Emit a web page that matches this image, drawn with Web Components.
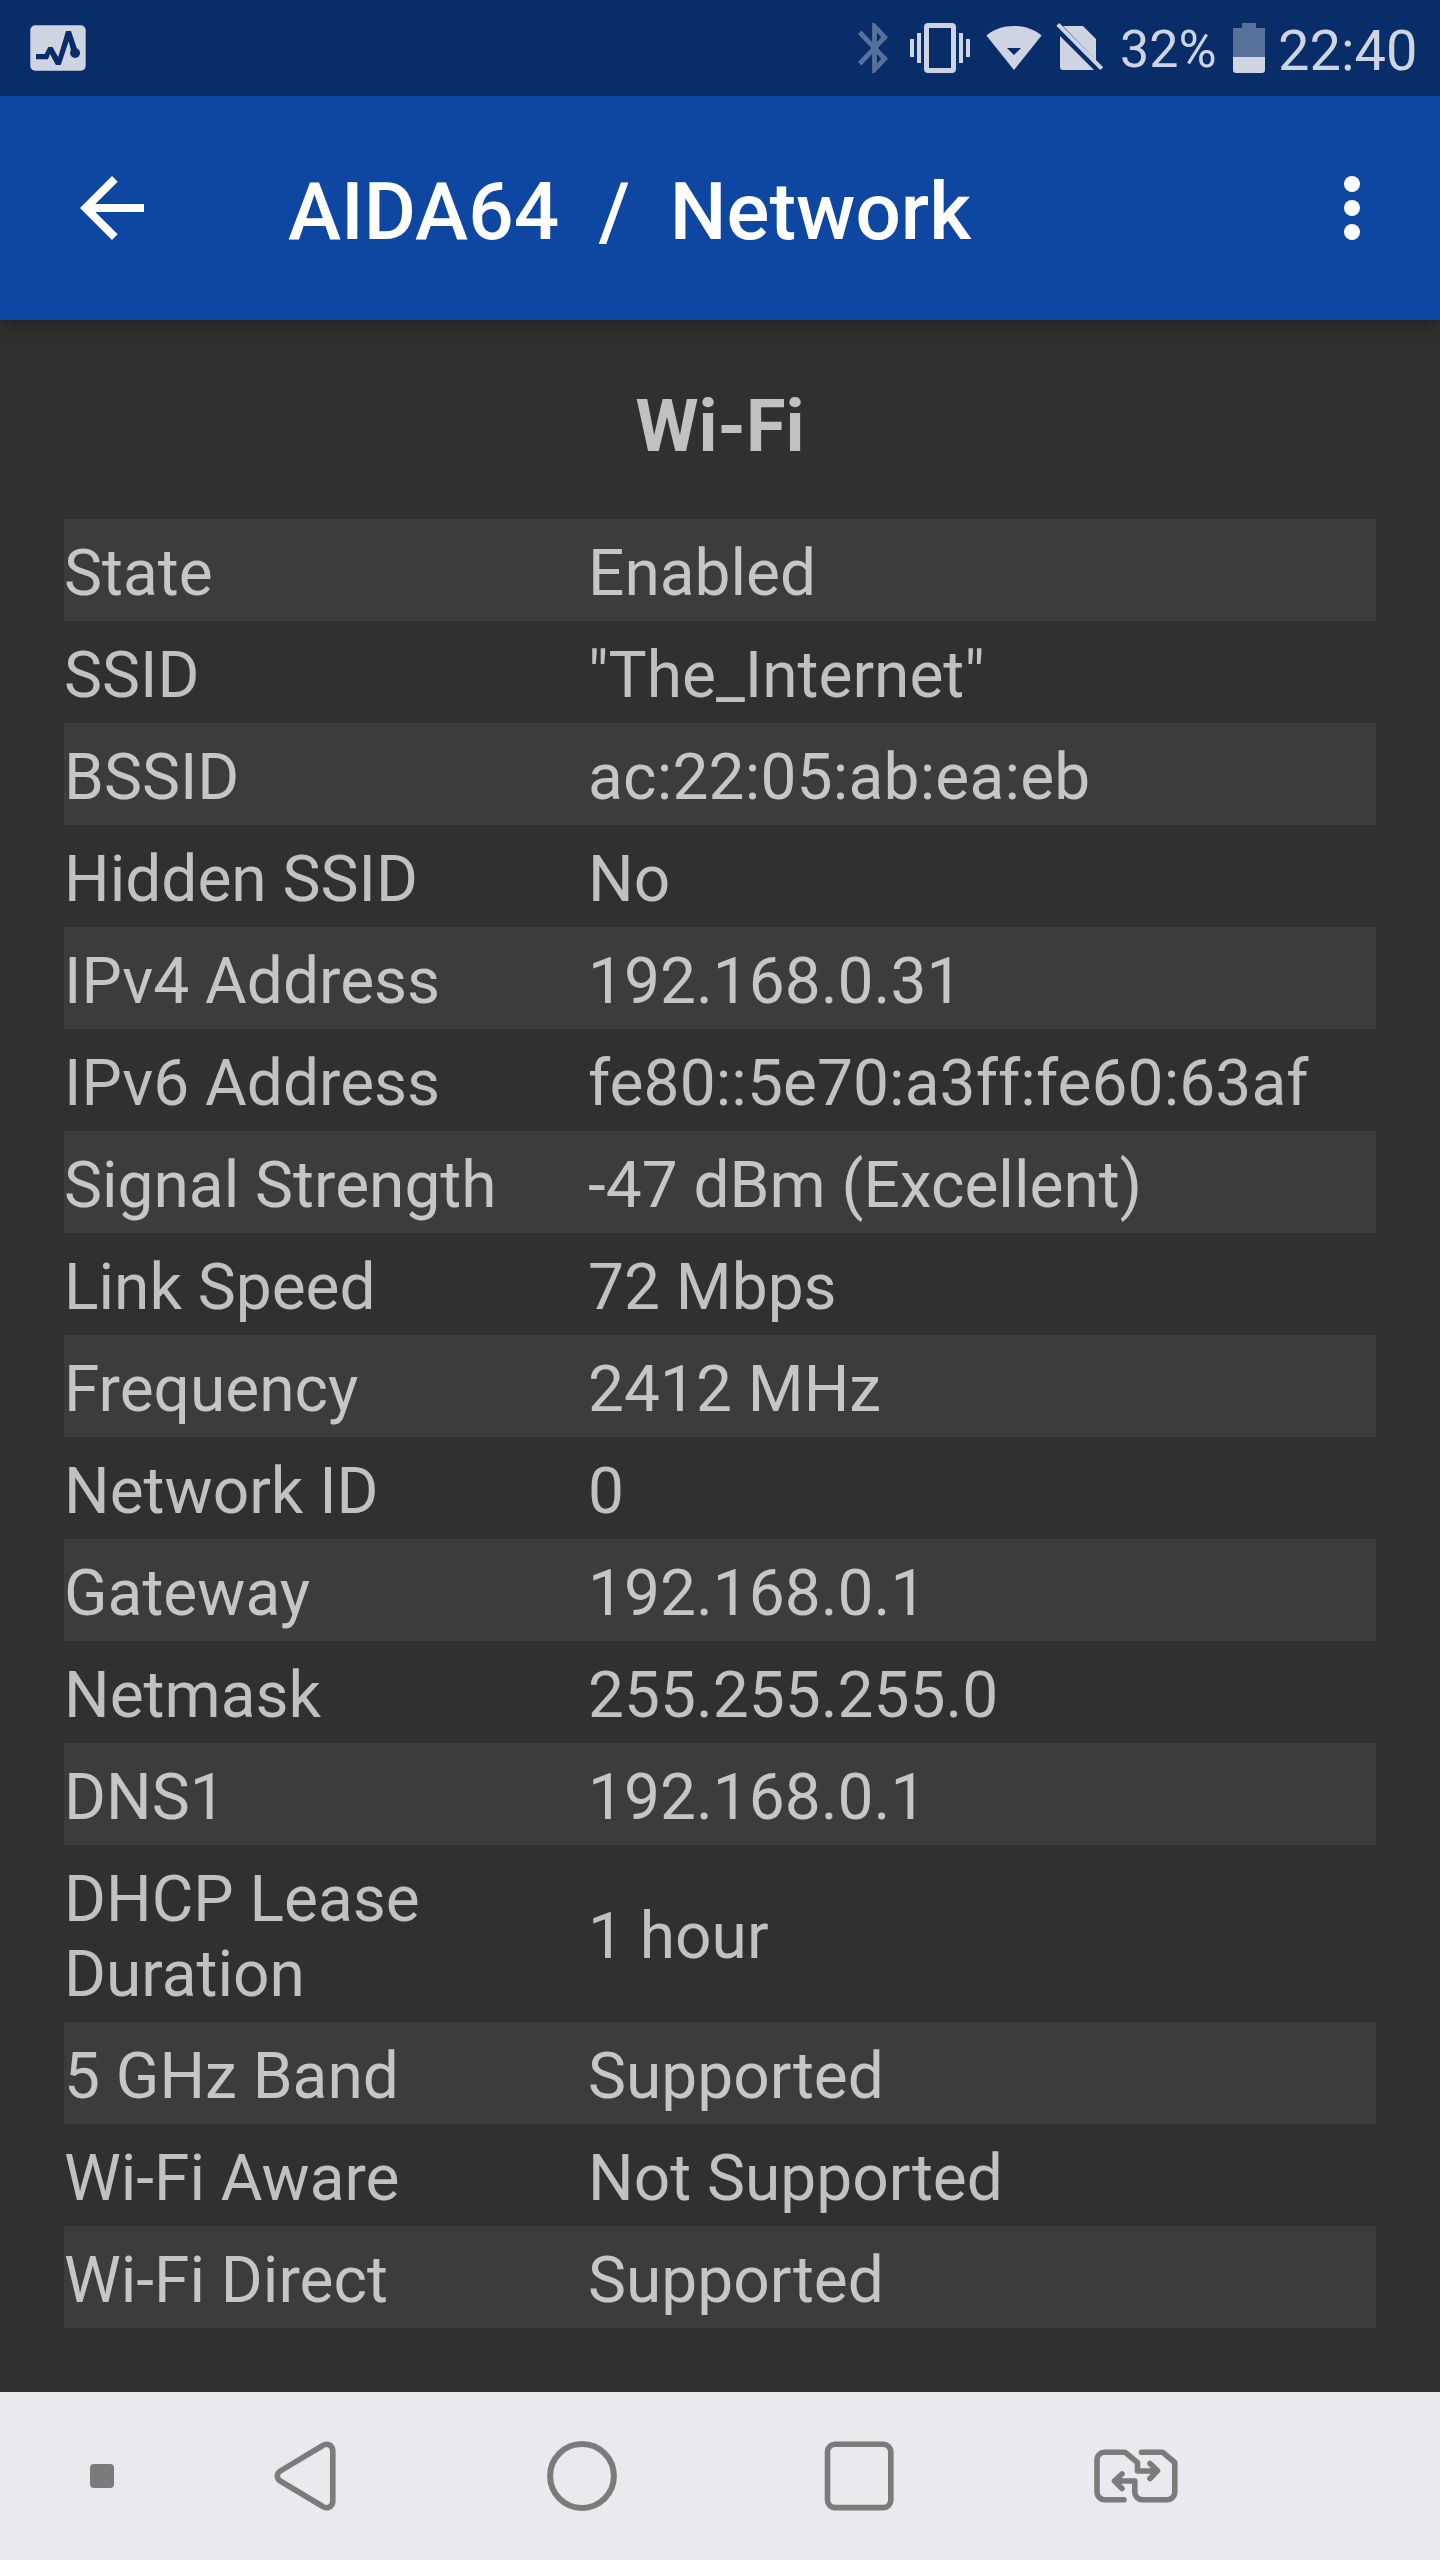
<!DOCTYPE html>
<html lang="en">
<head>
<meta charset="utf-8">
<title>AIDA64 / Network</title>
<style>
html,body{margin:0;padding:0;background:#303030}
body{font-family:Roboto,"Liberation Sans",sans-serif}
</style>
</head>
<body>
<phone-screen>
  <status-bar slot="status" percent="32%" time="22:40"></status-bar>
  <app-bar slot="appbar">AIDA64&nbsp; /&nbsp; Network</app-bar>
  <info-section heading="Wi-Fi">
    <info-row label="State">Enabled</info-row>
    <info-row label="SSID">"The_Internet"</info-row>
    <info-row label="BSSID" style="--tracking:.2px">ac:22:05:ab:ea:eb</info-row>
    <info-row label="Hidden SSID">No</info-row>
    <info-row label="IPv4 Address">192.168.0.31</info-row>
    <info-row label="IPv6 Address" style="--tracking:.09px">fe80::5e70:a3ff:fe60:63af</info-row>
    <info-row label="Signal Strength">-47 dBm (Excellent)</info-row>
    <info-row label="Link Speed">72 Mbps</info-row>
    <info-row label="Frequency">2412 MHz</info-row>
    <info-row label="Network ID">0</info-row>
    <info-row label="Gateway">192.168.0.1</info-row>
    <info-row label="Netmask">255.255.255.0</info-row>
    <info-row label="DNS1">192.168.0.1</info-row>
    <info-row label="DHCP Lease Duration">1 hour</info-row>
    <info-row label="5 GHz Band">Supported</info-row>
    <info-row label="Wi-Fi Aware">Not Supported</info-row>
    <info-row label="Wi-Fi Direct">Supported</info-row>
  </info-section>
  <nav-bar slot="nav"></nav-bar>
</phone-screen>
<script>
class Base extends HTMLElement {
  constructor() {
    super();
    this.attachShadow({ mode: 'open' });
  }
  connectedCallback() {
    this.shadowRoot.innerHTML = this.render();
  }
}

customElements.define('phone-screen', class extends Base {
  render() {
    return `<style>
      :host{display:flex;flex-direction:column;width:1440px;height:2560px;background:#303030;overflow:hidden}
      main{flex:1;min-height:0}
    </style>
    <slot name="status"></slot><slot name="appbar"></slot><main><slot></slot></main><slot name="nav"></slot>`;
  }
});

customElements.define('status-bar', class extends Base {
  render() {
    return `<style>
      :host{display:flex;flex:none;height:96px;background:#082d68;color:#ced4e1;overflow:hidden;position:relative;z-index:1}
      svg{display:block;flex:none;fill:#ced4e1}
      .app{margin-left:28px}
      .right{display:flex;margin-left:auto;width:588px}
      .vib{margin-left:8px}
      .wifi,.sim{margin-left:4px}
      span{white-space:nowrap;line-height:96px;flex:none}
      .pct{font-size:52px;width:113px;margin:2px 0 0 12px}
      .time{font-size:56px;margin:3px 0 0 13px}
    </style>
    <svg class="app" width="60" height="96" viewBox="28 0 60 96">
      <rect x="30.3" y="25.3" width="55.4" height="45.4" rx="5"/>
      <path fill="#082d68" d="M36 54h8.7l3.6-7h4.2l5.7 10 7.8-26h5l5.8 17.3a5 5 0 1 1-6.3 2.7l.4-1-2.2-8.7L60.7 65h-4.8L50 54l-2 5.3H36z"/>
    </svg>
    <div class="right">
      <svg width="44" height="96" viewBox="852 0 44 96">
        <path fill="#57719b" transform="translate(846.2 18) scale(2.36 2.5)" d="M17.71 7.71 12 2h-1v7.59L6.41 5 5 6.41 10.59 12 5 17.59 6.41 19 11 14.41V22h1l5.71-5.71-4.3-4.29zM13 5.83l1.88 1.88L13 9.59zm1.88 10.46L13 18.17v-3.76z"/>
      </svg>
      <svg class="vib" width="72" height="96" viewBox="904 0 72 96">
        <path d="M910 39h4v18h-4zM917 33h4v30h-4zM959 33h4v30h-4zM966 39h4v18h-4z"/>
        <path fill-rule="evenodd" d="M928 23h24a4 4 0 0 1 4 4v42a4 4 0 0 1-4 4h-24a4 4 0 0 1-4-4V27a4 4 0 0 1 4-4zM929 28v40h22V28z"/>
      </svg>
      <svg class="wifi" width="68" height="96" viewBox="980 0 68 96">
        <path fill-rule="evenodd" d="M1014 70 986.4 35.4C994 29.200 1003.500 26 1014 26s20 3.200 27.600 9.400zM1007 48l7 7 7-7z"/>
      </svg>
      <svg class="sim" width="56" height="96" viewBox="1052 0 56 96">
        <path d="M1056.300 25.800l3-2.800 43.900 44.200-3 2.800zM1063 26h20l13 13v21zM1060 36l34 34h-31a3 3 0 0 1-3-3z"/>
      </svg>
      <span class="pct">${this.getAttribute('percent')}</span>
      <svg width="32" height="96" viewBox="1233 0 32 96">
        <path fill="#57719b" d="M1233 57V28h9v-5h14v5h9v29z"/>
        <path d="M1233 57h32v13a3 3 0 0 1-3 3h-26a3 3 0 0 1-3-3z"/>
      </svg>
      <span class="time">${this.getAttribute('time')}</span>
    </div>`;
  }
});

customElements.define('app-bar', class extends Base {
  render() {
    return `<style>
      :host{display:flex;flex:none;align-items:center;height:224px;padding:0 40px 0 64px;box-sizing:border-box;background:#0d47a1;color:#fff;position:relative;box-shadow:0 4px 16px rgba(0,0,0,.34)}
      svg{display:block;width:96px;height:96px;fill:#fff;flex:none}
      h1{margin:0 auto 0 128px;padding-top:8px;font-size:80px;font-weight:500;line-height:94px;white-space:nowrap}
    </style>
    <svg viewBox="0 0 24 24"><path d="M20 11H7.830l5.590-5.590L12 4l-8 8 8 8 1.410-1.410L7.830 13H20z"/></svg>
    <h1><slot></slot></h1>
    <svg viewBox="0 0 24 24"><circle cx="12" cy="6" r="2"/><circle cx="12" cy="12" r="2"/><circle cx="12" cy="18" r="2"/></svg>`;
  }
});

customElements.define('info-section', class extends Base {
  render() {
    return `<style>
      :host{display:block;padding:64px 64px 0;color:#c1c1c1}
      h2{margin:0 0 50px;font-size:72px;font-weight:700;line-height:85px;text-align:center}
      ::slotted(info-row:nth-child(odd)){background:#3c3c3c;color:#c6c6c6}
    </style>
    <h2>${this.getAttribute('heading')}</h2><slot></slot>`;
  }
});

customElements.define('info-row', class extends Base {
  render() {
    return `<style>
      :host{display:grid;grid-template-columns:524px 1fr;font-size:64px;line-height:75px}
      div{padding:17px 0 10px}
      .label{padding-right:60px}
      .value{align-self:center;margin-bottom:1px;margin-top:-1px;white-space:nowrap;letter-spacing:var(--tracking,normal)}
      :host(:not([label^="DHCP"])) .value{margin:0}
    </style>
    <div class="label">${this.getAttribute('label')}</div><div class="value"><slot></slot></div>`;
  }
});

customElements.define('nav-bar', class extends Base {
  render() {
    return `<style>
      :host{display:flex;flex:none;align-items:center;height:168px;padding-left:54px;box-sizing:border-box;background:#e9eaee}
      svg{display:block;flex:none;width:96px;height:96px;fill:none;stroke:#7a7b7a;stroke-width:5.6;stroke-linejoin:round;stroke-linecap:round}
      .keys{display:flex;gap:181px;margin-left:107px}
    </style>
    <svg viewBox="54 2428 96 96"><rect x="90" y="2464" width="24" height="24" rx="4" fill="#7a7b7a" stroke="none"/></svg>
    <div class="keys">
      <svg viewBox="257 2428 96 96"><path d="M332.800 2451v50c0 5.500-5.500 8.500-10 5.500l-42.500-25.500c-4-2.500-4-7.500 0-10l42.500-25.500c4.500-3 10 0 10 5.500z"/></svg>
      <svg viewBox="534 2428 96 96"><circle cx="582" cy="2476" r="31.900" stroke-width="6"/></svg>
      <svg viewBox="811 2428 96 96"><rect x="827.500" y="2444.300" width="63.300" height="63.300" rx="7.500"/></svg>
      <svg viewBox="1088 2428 96 96"><path d="M1124 2499.700h-19.500a7.500 7.500 0 0 1-7.500-7.500v-32.500a7.500 7.500 0 0 1 7.500-7.500h20.500l12.500 10.500v8.300h19.500M1150 2463.500l7.500 7.300-7.500 7.700M1141.500 2452.200h21l12.300 10.300v29.700a7.500 7.500 0 0 1-7.500 7.500h-25a7.500 7.500 0 0 1-7.500-7.500V2481h-20M1122 2474l-7.500 7 7.500 7.500"/></svg>
    </div>`;
  }
});
</script>
</body>
</html>
